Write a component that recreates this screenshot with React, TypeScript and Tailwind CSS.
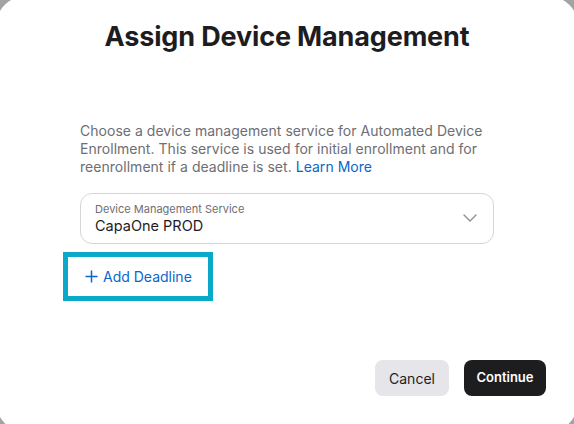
import React from "react";

export default function App() {
  return (
    <div className="w-[574px] h-[424px] overflow-hidden bg-[#a3a3a3]">
      <div
        className="-ml-[4px] -mt-[4px] w-[582px] h-[436px] rounded-[30px] bg-white flex flex-col"
        style={{ fontFamily: 'Inter, "Liberation Sans", Arial, sans-serif' }}
      >
        <h1 className="mt-[25px] text-center text-[27px] leading-[32px] font-bold text-[#1d1d1f] tracking-[-0.15px]">
          Assign Device Management
        </h1>
        <div className="mt-[69px] ml-[84px] w-[430px]">
          <p className="text-[14px] leading-[18px] text-[#6e6e73] tracking-[0.03px]">
            Choose a device management service for Automated Device Enrollment. This service is used for initial enrollment and for reenrollment if a deadline is set.{" "}
            <span className="text-[#0a66c9]">Learn More</span>
          </p>
          <div className="mt-[17px] w-[414px] h-[51px] rounded-[12px] border border-[#d6d6d9] flex items-center justify-between pl-[14px] pr-[16px]">
            <div className="flex flex-col">
              <span className="text-[11px] leading-[13px] text-[#6e6e73]">Device Management Service</span>
              <span className="text-[14.5px] leading-[19px] text-[#1d1d1f]">CapaOne PROD</span>
            </div>
            <svg width="14" height="8" viewBox="0 0 14 8" fill="none" className="mt-[-2px]">
              <path d="M1 1l6 6 6-6" stroke="#8e8e93" strokeWidth="1.4" strokeLinecap="round" strokeLinejoin="round" />
            </svg>
          </div>
          <div className="mt-[8px] -ml-[17px] w-[150px] h-[49px] border-[5px] border-[#0aa9c9] flex items-center pl-[17px] gap-[5px] text-[#0a66c9]">
            <svg width="13" height="13" viewBox="0 0 13 13" fill="none">
              <path d="M6.5 0.5v12M0.5 6.5h12" stroke="#0a66c9" strokeWidth="1.5" />
            </svg>
            <span className="text-[14px] leading-[18px]">Add Deadline</span>
          </div>
        </div>
        <div className="mt-[59px] ml-[379px] flex gap-[15px]">
          <button className="w-[74px] h-[36px] rounded-[8px] bg-[#e5e5ea] text-[14px] text-[#1d1d1f]">Cancel</button>
          <button className="w-[82px] h-[36px] rounded-[8px] bg-[#1d1d1f] text-[13px] font-semibold text-white">Continue</button>
        </div>
      </div>
    </div>
  );
}
